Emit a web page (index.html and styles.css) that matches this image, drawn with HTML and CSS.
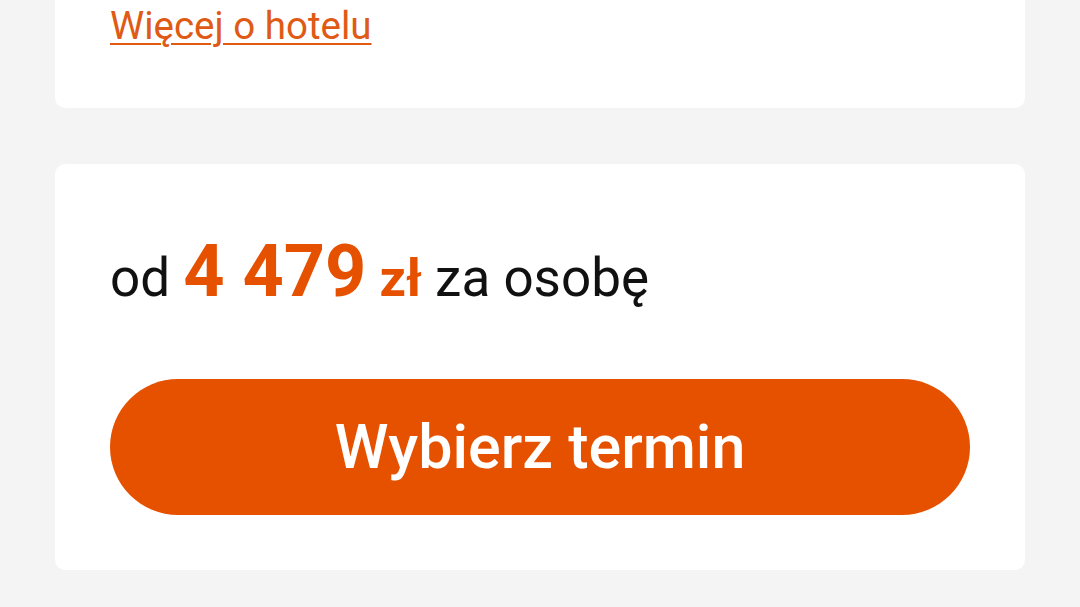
FILE: index.html
```html
<!DOCTYPE html>
<html lang="pl">
<head>
    <meta charset="UTF-8">
    <meta name="viewport" content="width=device-width, initial-scale=1.0">
    <title>Hotel - oferta</title>
    <link rel="stylesheet" href="styles.css">
</head>
<body>
    <div class="page">
        <div class="card card-top">
            <a href="#" class="more-link">Więcej o hotelu</a>
        </div>

        <div class="card card-offer">
            <p class="price">
                od <span class="amount">4 479</span> <span class="currency">zł</span> za osobę
            </p>
            <button class="btn">Wybierz termin</button>
        </div>
    </div>
</body>
</html>
```

FILE: styles.css
```css
:root {
    --primary-color: #e65100;
    --link-color: #df5a14;
    --text-color: #111;
    --light-gray: #f4f4f4;
    --white: #ffffff;
}

* {
    margin: 0;
    padding: 0;
    box-sizing: border-box;
}

body {
    font-family: Roboto, 'Noto Sans', sans-serif;
    color: var(--text-color);
    background: var(--light-gray);
    height: 100vh;
    overflow: hidden;
}

.page {
    display: flex;
    flex-direction: column;
    gap: 56px;
    padding: 0 55px;
}

.card {
    background: var(--white);
    border-radius: 10px;
    padding: 0 55px;
}

/* the top card is scrolled past, only its bottom shows */
.card-top {
    border-radius: 0 0 10px 10px;
    padding-bottom: 56px;
}

.more-link {
    display: inline-block;
    font-size: 38.5px;
    line-height: 52px;
    color: var(--link-color);
    text-decoration: underline;
    text-decoration-thickness: 2px;
    text-underline-offset: 4px;
}

.card-offer {
    padding-top: 72px;
    padding-bottom: 55px;
}

.price {
    font-size: 53px;
    line-height: 80px;
    color: var(--text-color);
}

.amount {
    font-size: 72px;
    line-height: 72px;
    font-weight: 700;
    color: var(--primary-color);
}

.currency {
    font-size: 52px;
    font-weight: 700;
    color: var(--primary-color);
}

.btn {
    display: block;
    width: 100%;
    height: 136px;
    margin-top: 60px;
    background: var(--primary-color);
    color: var(--white);
    border: none;
    border-radius: 68px;
    font-family: inherit;
    font-size: 61px;
    font-weight: 500;
    cursor: pointer;
}
```
